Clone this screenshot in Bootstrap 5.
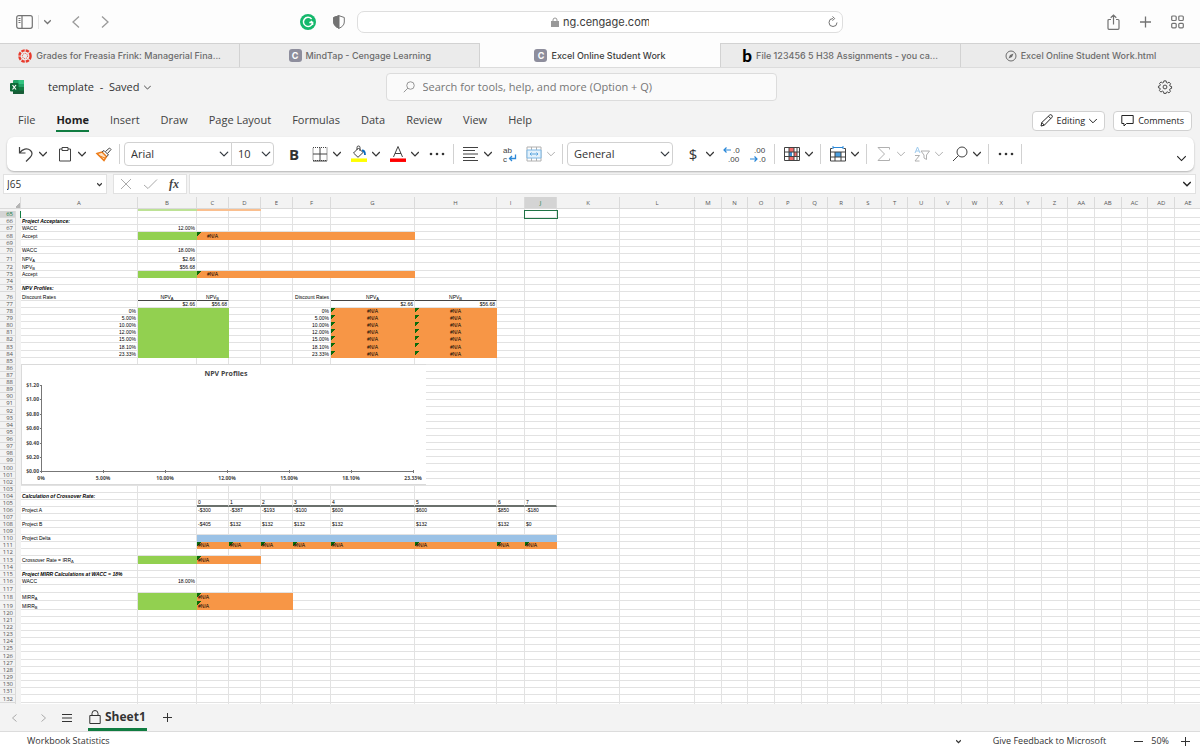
<!DOCTYPE html>
<html lang="en">
<head>
<meta charset="utf-8">
<meta name="viewport" content="width=device-width, initial-scale=1">
<title>Excel Online Student Work</title>
<link href="https://cdn.jsdelivr.net/npm/bootstrap@5.3.0/dist/css/bootstrap.min.css" rel="stylesheet">
<style>
  :root { --xl-green: #107c41; --ui: "Open Sans", "Noto Sans", sans-serif; --sf: Inter, Roboto, sans-serif; }
  body { font: 11px/16px var(--ui); color: #333; background: #f3f3f3; }
  svg { display: block; flex: none; fill: none; overflow: visible; }
  svg:not([stroke]) { stroke: currentColor; }
  button { border: 0; background: none; padding: 0; color: inherit; }
  input, select { font: inherit; color: inherit; }
  .side { flex: 1 1 0; }
  .rule { width: 1px; height: 20px; background: #d1d1d1; }

  /* browser chrome */
  .safari { height: 43px; background: #fdfdfd; color: #737373; font-family: var(--sf); }
  .safari .side:first-child { gap: 5px; }
  .safari .rule { height: 14px; background: #e4e4e4; }
  .address { width: 486px; height: 22px; border: 1px solid #dedede; border-radius: 7px; background: #fff; }
  .address input { width: 86px; border: 0; padding: 0; background: none; color: #3c3c3c; font-size: 11px; line-height: 16px; }
  .tab-strip { height: 25px; border-top: 1px solid #d2d2d2; border-bottom: 1px solid #dcdcdc; background: #ebebeb; }
  .tab-strip a { flex: 1 1 0; min-width: 0; border-right: 1px solid #d2d2d2; color: #6c6c6c; text-decoration: none; font: 500 9px/14px var(--sf); gap: 4px; }
  .tab-strip a:last-child { border-right: 0; }
  .tab-strip a.current { background: #fdfdfd; color: #3d3d3d; margin-top: -1px; padding-top: 1px; }
  .site-c { width: 13px; height: 13px; border-radius: 3px; background: #8e8e9d; color: #fff; font: 700 9px/13px var(--sf); text-align: center; }
  .site-b { color: #000; font: 900 17px/18px Lato, sans-serif; }

  /* title and menus */
  .title-row { padding: 5px 0 3px 2px; }
  .search-box { width: 391px; height: 28px; border: 1px solid #dcdcdc; border-radius: 4px; background: #fafafa; color: #767676; }
  .search-box input { border: 0; background: none; padding: 0; }
  .search-box input::placeholder { color: #767676; opacity: 1; }
  .menus { height: 33px; gap: 21px; padding-left: 18px; }
  .menus a { color: #424242; text-decoration: none; line-height: 20px; border-bottom: 2px solid transparent; }
  .menus a.current { color: #1f1f1f; font-weight: 700; border-color: var(--xl-green); }
  .pill { height: 20px; border: 1px solid #d1d1d1; border-radius: 4px; background: #fff; font-size: 9px; line-height: 16px; font-weight: 500; padding: 0 7px; gap: 4px; color: #242424; }

  /* ribbon */
  .ribbon { height: 34px; margin: 0 6px 0 7px; padding-left: 2px; background: #fff; border-radius: 7px; box-shadow: 0 1px 2px #0004; color: #424242; }
  .grp { gap: 10px; padding: 0 7px 0 9px; }
  .grp.tight { gap: 9px; }
  .grp.wide { padding-left: 12px; padding-right: 8px; }
  .tool { display: flex; align-items: center; gap: 5px; }
  .tool:disabled { color: #b0b0b0; }
  .tool text { font: 8px "Liberation Sans", sans-serif; fill: #424242; stroke: none; }
  .glyph { width: 16px; font-size: 15px; line-height: 20px; text-align: center; color: #333; }
  .pick { height: 24px; padding: 0 18px 0 6px; font-size: 11px; line-height: 16px; border: 1px solid #d1d1d1; border-radius: 4px; background-position: right 2px center; background-size: 10px 10px; color: #333; box-shadow: none; }
  .pick-font { width: 108px; border-radius: 4px 0 0 4px; }
  .pick-size { width: 43px; margin-left: -1px; border-radius: 0 4px 4px 0; }
  .pick-num { width: 106px; }

  /* formula row */
  .formula { padding: 3px 4px 3px 3px; gap: 2px; }
  .fbox { height: 20px; border: 1px solid #e1e1e1; background: #fff; }
  .fbox input { border: 0; padding: 0 3px; background: none; font-size: 10px; min-width: 0; line-height: 16px; }
  .name-box { width: 104px; }
  .fx-tools { width: 74px; padding: 0 7px; justify-content: space-between; }
  .fx-label { font: italic 700 12px/16px "Liberation Serif", serif; color: #444; }

  /* worksheet */
  .sheet-pane { overflow: hidden; background: #fff; min-height: 0; }
  .sheet { width: calc(100% + 2px); table-layout: fixed; border-collapse: separate; border-spacing: 0; font: 5px/6px "Liberation Sans", sans-serif; color: #000; }
  .sheet th, .sheet td { padding: 0 1px; height: 7px; border-right: 1px solid #e2e2e2; border-bottom: 1px solid #e2e2e2; white-space: nowrap; vertical-align: bottom; }
  .sheet th { font: 6px/6px var(--ui); color: #555; background: #f3f3f3; text-align: right; padding-right: 2px; border-color: #dadada; }
  .sheet thead th { height: 12px; text-align: center; vertical-align: middle; padding: 0; }
  .sheet thead .corner { border-right: 0; }
  .sheet thead .select-all { background: linear-gradient(135deg, transparent 50%, #b5b5b5 50%) right bottom / 5px 5px no-repeat #f3f3f3; }
  .sheet .gutter { background: #f3f3f3; border: 0; padding: 0; }
  .sheet .strip td { height: 2px; border-bottom: 0; }
  .sheet .h8 td { height: 8px; } .sheet .h9 td { height: 9px; }
  .sheet .on { background: #d4d4d4; color: var(--xl-green); }
  .sheet .on + .gutter { border-right: 1px solid var(--xl-green); }
  .sheet sub { font-size: 4px; line-height: 0; bottom: -1px; }
  .sheet .r { text-align: right; } .sheet .c { text-align: center; } .sheet .b { font-weight: 700; font-style: italic; }
  .sheet .green { background: #92d050; border-color: #92d050; }
  .sheet .orange { background: #f79646; border-color: #f79646; }
  .sheet .blue { background: #9bc2e6; border-color: #9bc2e6; }
  .sheet .pale { opacity: .6; }
  .sheet .err { background-image: linear-gradient(135deg, #0b6b0b 3px, transparent 3px); }
  .sheet .under { border-bottom-color: #444; }
  .sheet .under2 { border-bottom: 2px solid #6a706c; line-height: 5px; }
  .sheet .cursor { outline: 1px solid #217346; position: relative; }
  .chart { position: absolute; z-index: 1; top: -1px; left: 0; width: 405px; height: 121px; background: #fff; border: 1px solid #dadada; border-right: 0; }
  .chart text { fill: #444; stroke: none; font: 700 5px var(--ui); }
  .chart .heading { font-size: 7px; }

  /* footer */
  .sheet-tabs { height: 28px; border-bottom: 1px solid #dcdcdc; }
  .sheet-tab { height: 27px; padding: 2px 1px 0; border-bottom: 3px solid var(--xl-green); font: 700 12px/20px var(--ui); gap: 4px; color: #333; }
  .status { height: 18px; padding: 0 10px 0 27px; background: #fff; font-size: 9px; line-height: 16px; color: #333; }
</style>
</head>
<body class="vh-100 d-flex flex-column overflow-hidden">

<svg width="0" height="0" class="position-absolute" aria-hidden="true">
  <symbol id="chev" viewBox="0 0 8 8"><path d="M0.2 2 4 5.800 7.800 2"/></symbol>
  <symbol id="dots" viewBox="0 0 16 16"><g fill="#333" stroke="none"><circle cx="2" cy="8" r="1.300"/><circle cx="8" cy="8" r="1.300"/><circle cx="14" cy="8" r="1.300"/></g></symbol>
  <symbol id="lens" viewBox="0 0 16 16"><circle cx="10" cy="6" r="5"/><path d="M6.400 9.600 1 15"/></symbol>
</svg>

<header class="safari d-flex align-items-center flex-shrink-0">
  <div class="side d-flex align-items-center">
    <button class="ms-3" aria-label="Sidebar"><svg width="17" height="14" viewBox="0 0 17 14" stroke-width="1.200"><rect x=".7" y=".7" width="15.600" height="12.600" rx="2"/><path d="M6 .7v12.600M2.500 3.500h2M2.500 5.500h2M2.500 7.500h2"/></svg></button>
    <span class="rule"></span>
    <button aria-label="Tab groups"><svg width="7" height="8" stroke-width="1.500"><use href="#chev"/></svg></button>
    <button class="ms-3" aria-label="Back"><svg width="8" height="12" stroke="#9a9a9a" stroke-width="1.300"><path d="M7 .5 1 6l6 5.500"/></svg></button>
    <button class="ms-3" aria-label="Forward"><svg width="8" height="12" stroke="#9a9a9a" stroke-width="1.300"><path d="M1 .5 7 6l-6 5.500"/></svg></button>
    <button class="ms-auto" aria-label="Grammarly"><svg width="16" height="16" stroke="none"><circle cx="8" cy="8" r="8" fill="#15b86c"/><path d="M11.600 5A4.600 4.600 0 1 0 12.600 8.600H9.300M10.800 7 12.600 8.600V11" stroke="#fff" stroke-width="1.500"/></svg></button>
    <button class="ms-2 ps-1 me-2 pe-1" aria-label="Privacy report"><svg width="12" height="14"><path d="M6 .7 11.300 2.500V7c0 3-2.300 5-5.300 6.300C3 12 .7 10 .7 7V2.500Z"/><path d="M6 .7V13.300C3 12 .7 10 .7 7V2.500Z" fill="currentColor"/></svg></button>
  </div>
  <div class="address d-flex align-items-center">
    <div class="side"></div>
    <svg width="8" height="10" class="me-1" stroke="#999"><rect x=".5" y="4.500" width="7" height="5" fill="#999"/><path d="M2 4.500V3a2 2 0 0 1 4 0v1.500"/></svg>
    <input type="text" value="ng.cengage.com" aria-label="Address">
    <div class="side d-flex justify-content-end"><button aria-label="Reload" class="me-1"><svg width="10" height="12"><path d="M5 2.500A4 4 0 1 0 9 6.500M4.500.5 6.700 2.500 4.500 4.700"/></svg></button></div>
  </div>
  <div class="side d-flex align-items-center justify-content-end gap-3">
    <button aria-label="Share"><svg width="13" height="16" stroke-width="1.200"><path d="M4 5.500H2a1 1 0 0 0-1 1v7.800a1 1 0 0 0 1 1h9a1 1 0 0 0 1-1V6.500a1 1 0 0 0-1-1H9M6.500 10.500V1M3.700 3.700 6.500 1l2.800 2.700"/></svg></button>
    <button class="mx-1" aria-label="New tab"><svg width="11" height="12" stroke-width="1.300"><path d="M5.500.5v11M0 6h11"/></svg></button>
    <button class="me-3" aria-label="Tab overview"><svg width="13" height="14" stroke-width="1.200"><rect x=".7" y="1" width="4.500" height="4.500" rx="1"/><rect x="7.800" y="1" width="4.500" height="4.500" rx="1"/><rect x=".7" y="8.300" width="4.500" height="4.500" rx="1"/><rect x="7.800" y="8.300" width="4.500" height="4.500" rx="1"/></svg></button>
  </div>
</header>

<nav class="tab-strip d-flex flex-shrink-0" aria-label="Browser tabs">
  <a href="#" class="d-flex align-items-center justify-content-center"><svg width="14" height="14" stroke="#e8392b"><circle cx="7" cy="7" r="5.600" stroke-width="2.400" stroke-dasharray="3.400 1"/><circle cx="7" cy="7" r="2.600" stroke-width="1" stroke-dasharray="1 1.040"/></svg>Grades for Freasia Frink: Managerial Fina...</a>
  <a href="#" class="d-flex align-items-center justify-content-center"><span class="site-c">C</span>MindTap - Cengage Learning</a>
  <a href="#" class="d-flex align-items-center justify-content-center current"><span class="site-c">C</span>Excel Online Student Work</a>
  <a href="#" class="d-flex align-items-center justify-content-center"><span class="site-b">b</span>File 123456 5 H38 Assignments - you ca...</a>
  <a href="#" class="d-flex align-items-center justify-content-center"><svg width="12" height="12"><circle cx="6" cy="6" r="5"/><path d="M8.500 3.500 7 7 3.500 8.500 5 5Z" fill="currentColor" stroke="none"/></svg>Excel Online Student Work.html</a>
</nav>

<div class="title-row d-flex align-items-center flex-shrink-0">
  <div class="side d-flex align-items-center">
    <svg width="14" height="14" class="ms-2 me-4" stroke="none"><rect x="3" width="11" height="14" rx="1" fill="#21a366"/><path d="M3 7h11v6a1 1 0 0 1-1 1H3Z" fill="#185c37"/><path d="M8.500 0H13a1 1 0 0 1 1 1v3H8.500Z" fill="#33c481"/><path d="M8.500 7H14v3.500H8.500Z" fill="#107c41"/><rect y="3" width="8.500" height="8.500" rx="1" fill="#0e6b38"/><path d="m2.500 5 3.500 4.500M6 5 2.500 9.500" stroke="#fff" stroke-width="1.200"/></svg>
    <span>template&nbsp; - &nbsp;Saved</span>
    <button class="ms-1" aria-label="File options"><svg width="7" height="7"><use href="#chev"/></svg></button>
  </div>
  <label class="search-box d-flex align-items-center px-3"><svg width="12" height="12" class="me-2"><use href="#lens"/></svg><input class="flex-fill" type="search" placeholder="Search for tools, help, and more (Option + Q)" aria-label="Search"></label>
  <div class="side d-flex justify-content-end ps-3 pe-4">
    <button class="me-1" aria-label="Settings"><svg width="14" height="14" viewBox="0 0 16 16" stroke="#333"><circle cx="8" cy="8" r="2.200"/><path d="M6.700 1h2.600l.4 2 1.200.5L12.600 2.400l1.800 1.900-1.100 1.700.4 1 1.800.4v2.200l-1.900.6-.4 1 1.100 1.800-1.800 1.700-1.700-1.100-1.200.5L9.300 15.300H6.700l-.5-2L5 12.700l-1.700 1.100-1.700-1.800 1-1.700-.4-1L.5 8.900V7.100L2.300 6.500l.4-1.100-1-1.500L3.500 2.200 5 3.300l1.300-.5Z"/></svg></button>
  </div>
</div>

<div class="menus d-flex align-items-center flex-shrink-0">
  <a href="#">File</a><a href="#" class="current">Home</a><a href="#">Insert</a><a href="#">Draw</a><a href="#">Page Layout</a><a href="#">Formulas</a><a href="#">Data</a><a href="#">Review</a><a href="#">View</a><a href="#">Help</a>
  <div class="d-flex gap-2 ms-auto pe-2">
    <button class="pill d-flex align-items-center"><svg width="13" height="13"><path d="M1 12l.8-3.500L9.500 1.200a1.600 1.600 0 0 1 2.300 2.300L4.300 11.200ZM8.500 2.300l2.300 2.300M1.800 8.500l2.500 2.700"/></svg>Editing<svg width="8" height="8"><use href="#chev"/></svg></button>
    <button class="pill d-flex align-items-center"><svg width="13" height="13"><path d="M.8 1.500h11.400v8H5.500L3 12V9.500H.8Z"/></svg>Comments</button>
  </div>
</div>

<div class="ribbon d-flex align-items-center flex-shrink-0" role="toolbar" aria-label="Home tools">
  <div class="grp d-flex align-items-center">
    <button class="tool" aria-label="Undo"><svg width="16" height="16" stroke-width="1.200"><path d="M1.500 1v6h6M1.800 6.700C4.500 3 9 1.500 12.500 4.500c2.500 2.500 1 5.500-.5 7L8 15.500"/></svg><svg width="8" height="8" stroke="#333" stroke-width="1.200"><use href="#chev"/></svg></button>
    <button class="tool" aria-label="Paste"><svg width="16" height="16"><path d="M5 3H2.500v12h11V3H11M5 1.500h6v3H5Z"/></svg><svg width="8" height="8" stroke="#333" stroke-width="1.200"><use href="#chev"/></svg></button>
    <button class="tool" aria-label="Format painter"><svg width="16" height="16"><path d="M1 7.500 6 6l4.500 4.500L8 14.500Z" fill="#fde3c6" stroke="#ed7d1a" stroke-width="1.500"/><path d="M2.500 9.500 9 12" stroke="#ed7d1a"/><path d="M6 6l2-1.500 4.500 4.500-2 1.500M9.500 5.500 13.500 2l1.500 1.500L11.500 7.500"/></svg></button>
  </div>
  <div class="rule me-1"></div>
  <select class="form-select pick pick-font" aria-label="Font"><option>Arial</option></select>
  <select class="form-select pick pick-size" aria-label="Font size"><option>10</option></select>
  <div class="grp wide d-flex align-items-center">
    <button class="tool" aria-label="Bold"><b class="glyph">B</b></button>
    <button class="tool" aria-label="Borders"><svg width="16" height="16"><path d="M1 1.500h14v13H1Z" stroke-dasharray="1 1"/><path d="M8 1.500v13M1 8h14M1 15h14"/></svg><svg width="8" height="8" stroke="#333" stroke-width="1.200"><use href="#chev"/></svg></button>
    <button class="tool" aria-label="Fill colour"><svg width="16" height="16"><path d="M7.500 2 12 6.500 7 11.300 2.500 7ZM6 4V1.500a1.500 1.500 0 0 1 3 0V5"/><path d="M11 4.500c2.500 0 3 2 3 4.500" stroke="#0f6cbd" stroke-width="1.800"/><path d="M0 14.200h16" stroke="#ff0" stroke-width="3.500"/></svg><svg width="8" height="8" stroke="#333" stroke-width="1.200"><use href="#chev"/></svg></button>
    <button class="tool" aria-label="Font colour"><svg width="16" height="16"><path d="M3.500 11 8 .5l4.500 10.500M5 7.500h6"/><path d="M0 14.200h16" stroke="red" stroke-width="3.500"/></svg><svg width="8" height="8" stroke="#333" stroke-width="1.200"><use href="#chev"/></svg></button>
    <button class="tool" aria-label="More font options"><svg width="16" height="16"><use href="#dots"/></svg></button>
  </div>
  <div class="rule"></div>
  <div class="grp tight d-flex align-items-center">
    <button class="tool" aria-label="Align"><svg width="16" height="16"><path d="M0 1.500h15M0 4.500h12M0 8h15M0 11.500h12M0 14.500h15"/></svg><svg width="8" height="8" stroke="#333" stroke-width="1.200"><use href="#chev"/></svg></button>
    <button class="tool" aria-label="Wrap text"><svg width="16" height="16"><text x="2" y="7">ab</text><text x="2" y="16">c</text><path d="M14.500 8.500V12.500H8.500M11 10 8.500 12.500 11 15" stroke="#2b88d8" stroke-width="1.300"/></svg></button>
    <button class="tool" aria-label="Merge cells" disabled><svg width="16" height="16"><path d="M1 1h14v14H1ZM5.500 1v3M10.500 1v3M5.500 12v3M10.500 12v3"/><path d="M1 4h14v8H1Z" fill="#e3f1fb" stroke="#7cb8e6"/><path d="M4 8h8M5.500 6.500 4 8l1.500 1.500M10.500 6.500 12 8l-1.500 1.500" stroke="#5aa5de"/></svg><svg width="8" height="8"><use href="#chev"/></svg></button>
  </div>
  <div class="rule me-1"></div>
  <select class="form-select pick pick-num" aria-label="Number format"><option>General</option></select>
  <div class="grp wide d-flex align-items-center">
    <button class="tool" aria-label="Currency"><span class="glyph">$</span><svg width="8" height="8" stroke="#333" stroke-width="1.200"><use href="#chev"/></svg></button>
    <button class="tool" aria-label="Increase decimal"><svg width="16" height="16"><text x="9" y="7">.0</text><text x="4" y="16">.00</text><path d="M0 4h7M2.500 1.500 0 4l2.500 2.500" stroke="#2b88d8" stroke-width="1.200"/></svg></button>
    <button class="tool" aria-label="Decrease decimal"><svg width="16" height="16"><text x="4" y="7">.00</text><text x="9" y="16">.0</text><path d="M0 13h7M4.500 10.500 7 13l-2.500 2.500" stroke="#2b88d8" stroke-width="1.200"/></svg></button>
  </div>
  <div class="rule"></div>
  <div class="grp d-flex align-items-center">
    <button class="tool" aria-label="Conditional formatting"><svg width="16" height="16"><path d="M5 1h5v5H5ZM5 10h5v5H5Z" fill="#f26b6b" stroke="none"/><path d="M5 6h3v4H5Z" fill="#3b8ed6" stroke="none"/><path d="M10 6h3v4h-3Z" fill="#f26b6b" stroke="none"/><path d="M.5 1.500h15v13H.5ZM.5 6h15M.5 10.500h15M5 1.500v13M10 1.500v13M13 1.500v13"/></svg><svg width="8" height="8" stroke="#333" stroke-width="1.200"><use href="#chev"/></svg></button>
  </div>
  <div class="rule"></div>
  <div class="grp d-flex align-items-center">
    <button class="tool" aria-label="Cells"><svg width="16" height="16"><path d="M5 6h6v5H5Z" fill="#4a9fe0" stroke="none"/><path d="M2.500 2.500h-2V15h15V2.500h-2M.5 6h15M.5 11h15M5 6v9M11 6v9"/><path d="M3 1.500h10M3 0v3M13 0v3" stroke="#2b88d8"/></svg><svg width="8" height="8" stroke="#333" stroke-width="1.200"><use href="#chev"/></svg></button>
  </div>
  <div class="rule"></div>
  <div class="grp tight d-flex align-items-center">
    <button class="tool" aria-label="AutoSum" disabled><svg width="16" height="16"><path d="M13.500 3.500V1.500H2L8.500 8 2 14.500h11.500v-2"/></svg><svg width="8" height="8"><use href="#chev"/></svg></button>
    <button class="tool" aria-label="Sort and filter" disabled><svg width="16" height="16"><path d="M1 7 3.500 1 6 7M2 5h3" stroke="#9fcbee"/><path d="M1 9.500h4.500L1 15h4.500M7 5h8.500L12.500 9v4.500l-2.500-1.500V9Z"/></svg><svg width="8" height="8"><use href="#chev"/></svg></button>
    <button class="tool" aria-label="Find"><svg width="16" height="16"><use href="#lens"/></svg><svg width="8" height="8" stroke="#333" stroke-width="1.200"><use href="#chev"/></svg></button>
  </div>
  <div class="rule"></div>
  <div class="grp d-flex align-items-center"><button class="tool" aria-label="More options"><svg width="16" height="16"><use href="#dots"/></svg></button></div>
  <div class="rule"></div>
  <button class="ms-auto me-2 mt-2" aria-label="Ribbon display"><svg width="9" height="9" stroke="#222"><use href="#chev"/></svg></button>
</div>

<div class="formula d-flex align-items-center flex-shrink-0">
  <div class="fbox name-box d-flex align-items-center me-1 pe-1"><input class="flex-fill" value="J65" aria-label="Name box" size="8"><svg width="5" height="5" stroke-width="2"><use href="#chev"/></svg></div>
  <div class="fbox fx-tools d-flex align-items-center">
    <button aria-label="Cancel"><svg width="11" height="10" stroke="#aaa"><path d="m0 0 10 10M10 0 0 10"/></svg></button>
    <button aria-label="Enter"><svg width="13" height="10" stroke="#aaa"><path d="m0 6 4 3.500L13 .5"/></svg></button>
    <button class="fx-label" aria-label="Insert function">fx</button>
  </div>
  <label class="fbox d-flex flex-fill align-items-center pe-1"><input class="flex-fill" aria-label="Formula"><svg width="8" height="8" stroke="#222" stroke-width="1.500"><use href="#chev"/></svg></label>
</div>

<main class="sheet-pane flex-fill"><table class="sheet" id="sheet"></table></main>

<div class="sheet-tabs d-flex align-items-center flex-shrink-0 ps-2">
  <button class="ms-1" aria-label="Previous sheet"><svg width="5" height="8" stroke="#aaa"><path d="M4.500.5.5 4l4 3.500"/></svg></button>
  <button class="ms-4" aria-label="Next sheet"><svg width="5" height="8" stroke="#aaa"><path d="M.5.5 4.500 4l-4 3.500"/></svg></button>
  <button class="mx-3" aria-label="All sheets"><svg width="10" height="10"><path d="M0 1.500h10M0 5h10M0 8.500h10"/></svg></button>
  <button class="sheet-tab d-flex align-items-center"><svg width="12" height="14"><path d="M.8 5.500h10.400v8H.8ZM3 5.500V3.500a3 3 0 0 1 6 0v2"/></svg>Sheet1</button>
  <button class="ms-3" aria-label="Add sheet"><svg width="9" height="9"><path d="M4.500 0v9M0 4.500h9"/></svg></button>
</div>
<footer class="status d-flex align-items-center flex-shrink-0">
  <span>Workbook Statistics</span>
  <div class="d-flex align-items-center ms-auto">
    <svg width="5" height="5" stroke-width="2"><use href="#chev"/></svg>
    <a href="#" class="text-reset text-decoration-none ms-4 me-4 ps-2">Give Feedback to Microsoft</a>
    <button class="ms-1" aria-label="Zoom out"><svg width="9" height="9"><path d="M0 4.500h9"/></svg></button>
    <span class="mx-2">50%</span>
    <button class="ms-1" aria-label="Zoom in"><svg width="9" height="9"><path d="M4.500 0v9M0 4.500h9"/></svg></button>
  </div>
</footer>

<script src="https://cdn.jsdelivr.net/npm/bootstrap@5.3.0/dist/js/bootstrap.bundle.min.js"></script>
<script>
  // Columns A..L have their own widths; the rest share what remains.
  const columns = [...'ABCDEFGHIJKLMNOPQRSTUVWXYZ', 'AA', 'AB', 'AC', 'AD', 'AE'];
  const widths = [117, 59, 32, 32, 32, 38, 84, 82, 28, 32, 63, 75];
  const tall = { 68: 8, 71: 9, 72: 8, 76: 9, 83: 8, 92: 8, 100: 8, 113: 8, 117: 8, 118: 8, 119: 9, 126: 8, 132: 8 };
  const cells = {};
  const put = (ref, html, cls = '') => {
    const c = cells[ref] ||= { html: '', cls: '' };
    if (html) c.html = html;
    c.cls += ' ' + cls;
  };
  const fill = (from, to, row, cls) => {
    for (let i = columns.indexOf(from); i <= columns.indexOf(to); i++) put(columns[i] + row, '', cls);
  };
  const NA = '#N/A', A = '<sub>A</sub>', B = '<sub>B</sub>';

  put('A66', 'Project Acceptance:', 'b'); put('A67', 'WACC'); put('A68', 'Accept');
  put('A70', 'WACC'); put('A71', 'NPV' + A); put('A72', 'NPV' + B); put('A73', 'Accept');
  put('A75', 'NPV Profiles:', 'b'); put('A76', 'Discount Rates');
  put('B67', '12.00%', 'r'); put('B70', '18.00%', 'r'); put('B71', '$2.66', 'r'); put('B72', '$56.68', 'r');
  for (const row of [68, 73]) { put('B' + row, '', 'green'); fill('C', 'G', row, 'orange'); put('C' + row, NA, 'c err'); }
  put('F76', 'Discount Rates', 'r');
  for (const [a, b] of ['BC', 'GH']) {
    put(a + 76, 'NPV' + A, 'c under'); put(b + 76, 'NPV' + B, 'c under');
    put(a + 77, '$2.66', 'r'); put(b + 77, '$56.68', 'r');
  }
  ['0%', '5.00%', '10.00%', '12.00%', '15.00%', '18.10%', '23.33%'].forEach((rate, i) => {
    const row = 78 + i;
    put('A' + row, rate, 'r'); put('F' + row, rate, 'r');
    fill('B', 'C', row, 'green');
    put('G' + row, NA, 'c orange err'); put('H' + row, NA, 'c orange err');
  });
  put('A104', 'Calculation of Crossover Rate:', 'b');
  put('A106', 'Project A'); put('A108', 'Project B'); put('A110', 'Project Delta');
  const projectA = ['-$300', '-$387', '-$193', '-$100', '$600', '$600', '$850', '-$180'];
  const projectB = ['-$405', '$132', '$132', '$132', '$132', '$132', '$132', '$0'];
  [...'CDEFGHIJ'].forEach((col, i) => {
    put(col + 105, String(i), 'under2'); put(col + 106, projectA[i]); put(col + 108, projectB[i]);
    put(col + 110, '', 'blue'); put(col + 111, NA, 'orange err');
  });
  put('A113', 'Crossover Rate = IRR<sub>Δ</sub>'); put('B113', '', 'green'); fill('C', 'D', 113, 'orange'); put('C113', NA, 'err');
  put('A115', 'Project MIRR Calculations at WACC = 18%', 'b'); put('A116', 'WACC'); put('B116', '18.00%', 'r');
  put('A118', 'MIRR' + A); put('A119', 'MIRR' + B);
  for (const row of [118, 119]) { put('B' + row, '', 'green'); fill('C', 'E', row, 'orange'); put('C' + row, NA, 'err'); }
  put('J65', '', 'cursor');

  // Empty line chart that floats over rows 86 to 102.
  const yAxis = ['$1.20', '$1.00', '$0.80', '$0.60', '$0.40', '$0.20', '$0.00'];
  const xAxis = ['0%', '5.00%', '10.00%', '12.00%', '15.00%', '18.10%', '23.33%'];
  let chart = '<svg class="chart" stroke="#777"><path d="M19.500 20V107.500M19 106.500H392"/><text class="heading" x="204" y="11" text-anchor="middle">NPV Profiles</text>';
  yAxis.forEach((t, i) => { const y = 20 + Math.round(i * 14.400); chart += `<path d="M18 ${y}.5h2"/><text x="17" y="${y + 2}" text-anchor="end">${t}</text>`; });
  xAxis.forEach((t, i) => { const x = 19 + i * 62; chart += `<path d="M${x}.5 105v3"/><text x="${x}" y="115" text-anchor="middle">${t}</text>`; });
  put('A86', chart + '</svg>', 'position-relative');

  let html = '<colgroup><col style="width:16px"><col style="width:5px">' +
    columns.map((c, i) => widths[i] ? `<col style="width:${widths[i]}px">` : '<col>').join('') + '</colgroup>';
  html += '<thead><tr><th class="corner"></th><th class="select-all"></th>' + columns.map(c => `<th scope="col"${c === 'J' ? ' class="on"' : ''}>${c}</th>`).join('') + '</tr></thead><tbody>';
  html += '<tr class="strip"><td class="gutter"></td><td class="gutter"></td>' +
    columns.map(c => `<td class="${c === 'B' ? 'green pale' : c === 'C' || c === 'D' ? 'orange pale' : ''}"></td>`).join('') + '</tr>';
  for (let row = 65; row <= 133; row++) {
    html += `<tr class="h${tall[row] || 7}"><th scope="row"${row === 65 ? ' class="on"' : ''}>${row}</th><td class="gutter"></td>` +
      columns.map(c => { const d = cells[c + row]; return d ? `<td class="${d.cls.trim()}">${d.html}</td>` : '<td></td>'; }).join('') + '</tr>';
  }
  document.getElementById('sheet').innerHTML = html + '</tbody>';
</script>
</body>
</html>
